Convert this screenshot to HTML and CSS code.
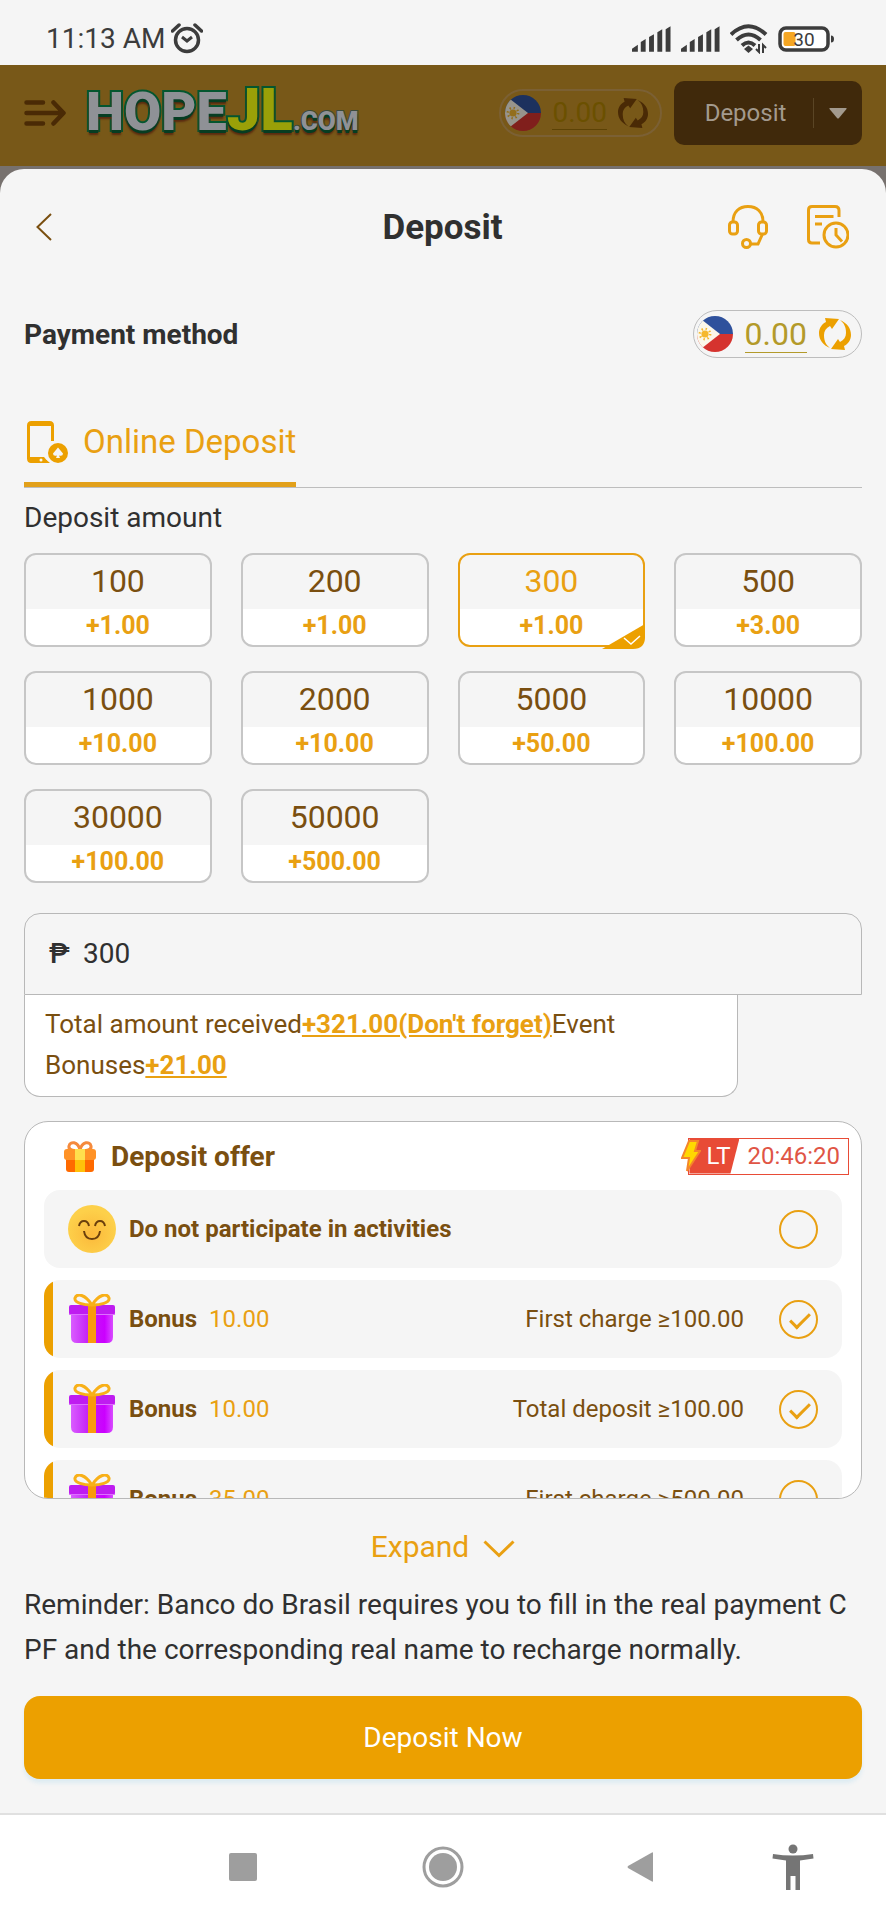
FILE: index.html
```html
<!DOCTYPE html>
<html lang="en">
<head>
    <meta charset="UTF-8">
    <meta name="viewport" content="width=device-width, initial-scale=1.0">
    <title>Deposit</title>
    <link rel="stylesheet" href="styles.css">
</head>
<body>

<!-- Shared icons -->
<svg class="defs" aria-hidden="true">
    <symbol id="flag" viewBox="0 0 36 36">
        <clipPath id="round"><circle cx="18" cy="18" r="18"/></clipPath>
        <g clip-path="url(#round)">
            <rect width="36" height="18" fill="#2f519c"/>
            <rect y="18" width="36" height="18" fill="#d5332e"/>
            <path d="M-4-3 23 18-4 39z" fill="#fbf7ea"/>
            <circle cx="8" cy="18" r="3.6" fill="#f5b82e"/>
            <circle cx="8" cy="18" r="5.2" fill="none" stroke="#f5b82e" stroke-width="2.4" stroke-dasharray="1.4 2.68"/>
        </g>
    </symbol>
    <symbol id="refresh" viewBox="0 0 32 32">
        <g fill="currentColor">
            <path id="arc" d="M11 30C4 27 0 22 0 15 0 10 3 6 7 4L6 0l14 1-7 10-2-3c-4 2-6 5-6 9 0 6 2 10 6 13z"/>
            <use href="#arc" transform="rotate(180 16 16)"/>
        </g>
    </symbol>
    <symbol id="gift" viewBox="0 0 48 50">
        <linearGradient id="box"><stop offset="0" stop-color="#d95cff"/><stop offset=".45" stop-color="#c31cf5"/><stop offset=".8" stop-color="#cb00ff"/><stop offset="1" stop-color="#d84cff"/></linearGradient>
        <path d="M3 20h42v23q0 6-6 6H9q-6 0-6-6z" fill="url(#box)"/>
        <rect x="1" y="11" width="46" height="10" rx="2" fill="#bf1cf0"/>
        <path d="M1 20.500h46" stroke="#dd70ff"/>
        <path d="M20 11h8v38h-8z" fill="#f99a0c"/>
        <path d="M24 11C17 0 9-1 7 4c-1 5 9 7 17 7zm0 0C31 0 39-1 41 4c1 5-9 7-17 7z" fill="none" stroke="#f8b019" stroke-width="3"/>
    </symbol>
    <symbol id="signal" viewBox="0 0 40 26">
        <path d="M0 26v-3l6-4v7zM9 26V16l5-3v13zM17.500 26V11l5-3v18zM26 26V6l5-3v23zM34.500 26V3l5-3v26z" fill="#3c3c3c"/>
    </symbol>
</svg>

<div class="status">
    <span class="time">11:13 AM</span>
    <svg class="alarm" viewBox="0 0 32 32" fill="none" stroke="#3c3c3c" stroke-width="3.500">
        <circle cx="16" cy="17" r="11.500"/>
        <path d="M1.500 8 8 2M30.500 8 24 2" stroke-linecap="round"/>
        <path d="m11 14 5 4 5-4" stroke-width="3"/>
    </svg>
    <div class="status-right">
        <svg class="signal"><use href="#signal"/></svg>
        <svg class="signal"><use href="#signal"/></svg>
        <svg class="wifi" viewBox="0 0 38 30" fill="none" stroke="#3c3c3c" stroke-width="4">
            <path d="M1 10.500Q18.500-6 36 10.500M6.500 16q12-11 24 0M12 21.500q6.500-6 13 0"/>
            <path d="m14 25 4.500-3.500L23 25l-4.500 4z" fill="#3c3c3c" stroke="none"/>
            <path d="M29 20v8l-3-3M33 29v-8l3 3" stroke-width="2"/>
        </svg>
        <svg class="battery" viewBox="0 0 56 26">
            <rect x="2" y="2" width="48" height="22" rx="6" fill="#fff" stroke="#3c3c3c" stroke-width="3.500"/>
            <rect x="5.500" y="6" width="12" height="14" rx="2" fill="#f5a623"/>
            <path d="M53 9.500q3 0 3 3.500t-3 3.500z" fill="#3c3c3c"/>
            <text x="26" y="20" text-anchor="middle" class="battery-text">30</text>
        </svg>
    </div>
</div>

<header class="topbar">
    <button class="icon-btn menu" aria-label="Menu">
        <svg viewBox="0 0 42 26" fill="none" stroke="#4a2a05" stroke-width="4.500" stroke-linecap="round" stroke-linejoin="round">
            <path d="M2.500 2.500H19M2.500 13H39M2.500 23.500H19M29.500 2.500 39.500 13l-10 10.500"/>
        </svg>
    </button>
    <a class="logo" href="#"><span class="hope">HOPE</span><span class="jl">JL</span><span class="com">.COM</span></a>
    <div class="balance balance-dim">
        <svg class="flag"><use href="#flag"/></svg>
        <span class="value">0.00</span>
        <button class="icon-btn" aria-label="Refresh"><svg class="refresh"><use href="#refresh"/></svg></button>
    </div>
    <div class="top-deposit">
        <button class="top-deposit-btn">Deposit</button>
        <button class="top-deposit-more" aria-label="More">
            <svg viewBox="0 0 18 11"><path d="M1 0h16q1 0 .5 1L10 10q-1 1-2 0L.5 1Q0 0 1 0z" fill="#a39a8e"/></svg>
        </button>
    </div>
</header>

<main class="backdrop">
<section class="sheet">
    <div class="sheet-head">
        <button class="icon-btn back" aria-label="Back">
            <svg viewBox="0 0 16 28" fill="none" stroke="#7a4f10" stroke-width="2"><path d="M15 1 1.500 14 15 27"/></svg>
        </button>
        <h1>Deposit</h1>
        <div class="head-actions">
            <button class="icon-btn" aria-label="Support">
                <svg class="support" viewBox="0 0 40 44" fill="none" stroke="#e9a012" stroke-width="3">
                    <rect x="1.500" y="17" width="8" height="12" rx="3"/>
                    <rect x="30.500" y="17" width="8" height="12" rx="3"/>
                    <path d="M5 17C5 7 11 1.500 20 1.500S35 7 35 17M34.500 29 30 39h-7.500"/>
                    <circle cx="18.500" cy="38.500" r="4"/>
                </svg>
            </button>
            <button class="icon-btn" aria-label="Records">
                <svg class="records" viewBox="0 0 42 44" fill="none" stroke="#e9a012" stroke-width="3">
                    <path d="M13 38H5q-3.500 0-3.500-3.500V5q0-3.500 3.500-3.500h23q4 0 4 4V12M8 11.500h18.500M8 19h7"/>
                    <circle cx="29" cy="30" r="12"/>
                    <path d="M29 23v7l6 6.500"/>
                </svg>
            </button>
        </div>
    </div>

    <div class="method">
        <h2>Payment method</h2>
        <div class="balance">
            <svg class="flag"><use href="#flag"/></svg>
            <span class="value">0.00</span>
            <button class="icon-btn" aria-label="Refresh"><svg class="refresh"><use href="#refresh"/></svg></button>
        </div>
    </div>

    <nav class="tabs">
        <a class="tab" href="#">
            <svg class="phone" viewBox="0 0 42 42">
                <path d="M20 40.500H4.500q-3 0-3-3v-33q0-3 3-3h18q3 0 3 3V20" fill="none" stroke="#eca000" stroke-width="3"/>
                <path d="M2 2h22v3H2zM2 36h15q2 3 6 6H5q-3 0-3-3z" fill="#eca000"/>
                <circle cx="14" cy="39" r="1.500" fill="#f5f5f5"/>
                <circle cx="31" cy="32" r="10" fill="#eca000"/>
                <path d="m31 26.500 5 6q0 3-4 2l1 2.500h-4l1-2.500q-4 1-4-2z" fill="#f5f5f5"/>
            </svg>
            Online Deposit
        </a>
    </nav>

    <form id="depositForm">
        <label class="amount-label" for="amount">Deposit amount</label>
        <div class="amounts">
            <button type="button" class="amount" data-value="100">100<b>+1.00</b></button>
            <button type="button" class="amount" data-value="200">200<b>+1.00</b></button>
            <button type="button" class="amount active" data-value="300">300<b>+1.00</b></button>
            <button type="button" class="amount" data-value="500">500<b>+3.00</b></button>
            <button type="button" class="amount" data-value="1000">1000<b>+10.00</b></button>
            <button type="button" class="amount" data-value="2000">2000<b>+10.00</b></button>
            <button type="button" class="amount" data-value="5000">5000<b>+50.00</b></button>
            <button type="button" class="amount" data-value="10000">10000<b>+100.00</b></button>
            <button type="button" class="amount" data-value="30000">30000<b>+100.00</b></button>
            <button type="button" class="amount" data-value="50000">50000<b>+500.00</b></button>
            <svg class="corner" id="corner" viewBox="0 0 43 25">
                <path d="M0 25 43 0v13q0 12-12 12z" fill="#eca000"/>
                <path d="m22 14 7 6 9-8" fill="none" stroke="#fff" stroke-width="1.500"/>
            </svg>
        </div>

        <div class="field">
            <span class="currency">₱</span>
            <input type="text" id="amount" name="amount" inputmode="numeric" value="300">
        </div>
        <p class="received">Total amount received<b>+321.00(Don't forget)</b>Event Bonuses<b>+21.00</b></p>

        <div class="offer">
            <div class="offer-head">
                <svg class="offer-icon" viewBox="0 0 32 31">
                    <path d="M16 9C12 10 4 10 5 5s9-5 11 4c2-9 10-9 11-4s-7 5-11 4z" fill="none" stroke="#f58a3c" stroke-width="3"/>
                    <path d="M2 18h28v10q0 3-3 3H5q-3 0-3-3z" fill="#ff6a00"/>
                    <rect y="8" width="32" height="11" rx="3" fill="#ff9226"/>
                    <path d="M11 8h10v23H11z" fill="#ffc10a"/>
                    <path d="M11 8h10v11H11z" fill="#ffdf4d"/>
                </svg>
                <h3>Deposit offer</h3>
                <div class="timer">
                    <span class="lt">LT</span>
                    <time>20:46:20</time>
                    <svg class="bolt" viewBox="0 0 20 34"><path d="M8 2h9l-3 10h5L6 32l2-13H1z" fill="#ffd800" stroke="#f5862a" stroke-width="2"/></svg>
                </div>
            </div>
            <label class="row plain">
                <svg class="row-icon" viewBox="0 0 48 48">
                    <radialGradient id="face" cy=".6"><stop offset="0" stop-color="#fbb83a"/><stop offset="1" stop-color="#fdd04a"/></radialGradient>
                    <circle cx="24" cy="24" r="24" fill="url(#face)"/>
                    <path d="M11 21q1-5 5-5t5 5M27 21q1-5 5-5t5 5M16 26q1 8 8 8t8-8" fill="none" stroke="#6b3f0c" stroke-width="2"/>
                </svg>
                <b>Do not participate in activities</b>
                <input type="checkbox" name="none">
            </label>
            <label class="row">
                <svg class="row-icon gift"><use href="#gift"/></svg>
                <b>Bonus</b><span class="bonus">10.00</span>
                <span class="rule">First charge ≥100.00</span>
                <input type="checkbox" name="first100" checked>
            </label>
            <label class="row">
                <svg class="row-icon gift"><use href="#gift"/></svg>
                <b>Bonus</b><span class="bonus">10.00</span>
                <span class="rule">Total deposit ≥100.00</span>
                <input type="checkbox" name="total100" checked>
            </label>
            <label class="row">
                <svg class="row-icon gift"><use href="#gift"/></svg>
                <b>Bonus</b><span class="bonus">35.00</span>
                <span class="rule">First charge ≥500.00</span>
                <input type="checkbox" name="first500">
            </label>
        </div>

        <button type="button" class="expand">Expand
            <svg viewBox="0 0 32 18" fill="none" stroke="#e9a012" stroke-width="3"><path d="m1.500 1.500 14.500 14 14.500-14"/></svg>
        </button>

        <p class="reminder">Reminder: Banco do Brasil requires you to fill in the real payment CPF and the corresponding real name to recharge normally.</p>

        <button type="submit" class="btn">Deposit Now</button>
    </form>
</section>
</main>

<footer class="sysnav">
    <button class="icon-btn" aria-label="Recent apps"><svg viewBox="0 0 46 46"><rect x="9" y="9" width="28" height="28" rx="2" fill="#9e9e9e"/></svg></button>
    <button class="icon-btn" aria-label="Home"><svg viewBox="0 0 46 46"><circle cx="23" cy="23" r="19" fill="none" stroke="#9e9e9e" stroke-width="3"/><circle cx="23" cy="23" r="14" fill="#9e9e9e"/></svg></button>
    <button class="icon-btn" aria-label="Back"><svg viewBox="0 0 46 46"><path d="M33 9v28q0 1-1 .5L8 24q-1-1 0-2L32 8.500q1-.5 1 .5z" fill="#9e9e9e"/></svg></button>
    <button class="icon-btn" aria-label="Accessibility"><svg viewBox="0 0 46 46"><circle cx="23" cy="5" r="4.500" fill="#757575"/><path d="M3 10q20 3 40 0l.5 4.500L30 16.500V46h-4.500V32h-5v14H16V16.500L2.500 14.500z" fill="#757575"/></svg></button>
</footer>

<script>
    const field = document.getElementById('amount');
    const corner = document.getElementById('corner');
    const buttons = document.querySelectorAll('.amount');

    // Move the tick to the chosen amount and copy it to the field
    function choose(button) {
        buttons.forEach(b => b.classList.remove('active'));
        button.classList.add('active');
        button.appendChild(corner);
        field.value = button.dataset.value;
    }

    buttons.forEach(b => b.addEventListener('click', () => choose(b)));
    choose(document.querySelector('.amount.active'));

    document.getElementById('depositForm').addEventListener('submit', e => e.preventDefault());
</script>

</body>
</html>
```

FILE: styles.css
```css
* {
    margin: 0;
    padding: 0;
    box-sizing: border-box;
}

body {
    font-family: Roboto, "Liberation Sans", sans-serif;
    font-size: 28px;
    color: #303030;
    background-color: #fff;
}

button,
input {
    font: inherit;
    color: inherit;
    border: none;
    background: none;
}

button {
    cursor: pointer;
}

a {
    text-decoration: none;
}

svg {
    display: block;
    flex-shrink: 0;
}

.defs {
    position: absolute;
    width: 0;
    height: 0;
}

.icon-btn {
    display: flex;
}

/* Phone status bar */
.status {
    display: flex;
    align-items: center;
    height: 65px;
    padding: 12px 52px 0 46px;
    background-color: #f5f5f5;
    color: #3c3c3c;
}

.alarm {
    width: 32px;
    height: 32px;
    margin-left: 6px;
}

.status-right {
    display: flex;
    align-items: center;
    gap: 10px;
    margin-left: auto;
}

.signal {
    width: 39px;
    height: 26px;
}

.wifi {
    width: 38px;
    height: 30px;
}

.battery {
    width: 56px;
    height: 26px;
}

.battery-text {
    font-size: 19px;
    fill: #3c3c3c;
}

/* Dimmed site header */
.topbar {
    display: flex;
    align-items: center;
    height: 101px;
    padding: 0 24px 5px;
    background-color: #785818;
}

.menu svg {
    width: 42px;
    height: 26px;
}

.logo {
    display: flex;
    align-items: baseline;
    padding-top: 4px;
    margin-left: 20px;
    font-weight: 900;
    font-size: 54px;
    line-height: 60px;
    color: #8f9196;
    -webkit-text-stroke: 4px #04562f;
    paint-order: stroke fill;
    text-shadow: 0 3px 0 #063d22, 0 5px 2px #5a2b10;
}

.jl {
    font-size: 60px;
    color: #9aa008;
}

.com {
    font-size: 26px;
    -webkit-text-stroke: 2px #3c4a3a;
}

.balance {
    display: flex;
    align-items: center;
    gap: 12px;
    height: 48px;
    padding: 0 10px 0 3px;
    border: 1px solid #bdbdbd;
    border-radius: 24px;
    font-size: 32px;
    color: #b39a2a;
}

.value {
    line-height: 36px;
    border-bottom: 1px solid #b39a2a;
}

.flag {
    width: 36px;
    height: 36px;
}

.refresh {
    width: 32px;
    height: 32px;
    color: #eca000;
}

.balance-dim {
    gap: 11px;
    margin-left: auto;
    padding: 0 12px 0 4px;
    border: 2px solid #7b6034;
    font-size: 28px;
    color: #6b5000;
}

.balance-dim .value {
    line-height: 32px;
    border-color: #5c4205;
}

.balance-dim .flag {
    filter: brightness(0.6);
}

.balance-dim .refresh {
    width: 30px;
    height: 30px;
    color: #4a2a05;
}

.top-deposit {
    display: flex;
    align-items: center;
    width: 188px;
    height: 64px;
    margin-left: 12px;
    border-radius: 10px;
    background-color: #40290b;
    color: #a39a8e;
    font-size: 24px;
}

.top-deposit-btn {
    flex: 1;
    line-height: 30px;
    padding-left: 4px;
    border-right: 1px solid #5a4525;
}

.top-deposit-more {
    padding: 10px 15px;
}

.top-deposit-more svg {
    width: 18px;
    height: 11px;
}

/* Deposit sheet */
.backdrop {
    padding-top: 3px;
    background-color: #77716e;
}

.sheet {
    padding: 0 24px 34px;
    border-radius: 24px 24px 0 0;
    background-color: #f5f5f5;
}

.sheet-head {
    display: grid;
    grid-template-columns: 1fr auto 1fr;
    align-items: center;
    height: 116px;
    padding: 0 13px 0 12px;
}

.back svg {
    width: 16px;
    height: 28px;
}

h1 {
    font-size: 35px;
}

.head-actions {
    display: flex;
    justify-content: flex-end;
    gap: 39px;
}

.support {
    width: 40px;
    height: 44px;
}

.records {
    width: 42px;
    height: 44px;
}

.method {
    display: flex;
    justify-content: space-between;
    align-items: center;
    margin-top: 25px;
}

h2,
h3 {
    font-size: 28px;
}

.tabs {
    display: flex;
    height: 90px;
    margin-top: 40px;
    border-bottom: 1px solid #bdbdbd;
}

.tab {
    display: flex;
    align-items: center;
    gap: 14px;
    padding: 3px 0 0 3px;
    border-bottom: 5px solid #e2a01a;
    font-size: 33px;
    color: #e9a012;
}

.phone {
    width: 42px;
    height: 42px;
}

.amount-label {
    display: block;
    margin: 12px 0 18px;
    line-height: 35px;
}

.amounts {
    display: grid;
    grid-template-columns: repeat(4, 1fr);
    gap: 24px 29px;
}

.amount {
    position: relative;
    height: 94px;
    border: 2px solid #c6c6c6;
    border-radius: 12px;
    background: linear-gradient(#f5f5f5 54px, #fff 54px);
    font-size: 32px;
    line-height: 52px;
    color: #7a4f10;
}

.amount b {
    display: block;
    font-size: 25px;
    line-height: 38px;
    color: #e9a012;
}

.amount.active {
    border-color: #e9a012;
    color: #e9a012;
}

.corner {
    position: absolute;
    right: -2px;
    bottom: -4px;
    width: 43px;
    height: 25px;
}

.field {
    display: flex;
    align-items: center;
    gap: 12px;
    height: 82px;
    margin-top: 30px;
    padding: 0 24px 2px;
    border: 1px solid #b8b8b8;
    border-radius: 16px 16px 0 0;
}

.field input {
    flex: 1;
    outline: none;
}

.currency {
    width: 22px;
    font-weight: 500;
}

.received {
    width: 85.2%;
    padding: 9px 100px 10px 20px;
    border: 1px solid #b8b8b8;
    border-top: none;
    border-radius: 0 0 16px 16px;
    background-color: #fff;
    font-size: 26px;
    line-height: 41px;
    color: #7a4f10;
}

.received b {
    color: #e9a012;
    text-decoration: underline;
}

/* Deposit offers */
.offer {
    height: 378px;
    margin-top: 24px;
    padding: 0 19px;
    overflow: hidden;
    border: 1px solid #b8b8b8;
    border-radius: 24px;
    background-color: #fff;
    color: #7a4f10;
}

.offer-head {
    display: flex;
    align-items: center;
    height: 68px;
    margin-right: -7px;
    padding-left: 20px;
}

.offer-icon {
    width: 32px;
    height: 31px;
}

h3 {
    margin-left: 15px;
}

.timer {
    position: relative;
    display: flex;
    margin-left: auto;
    border: 1px solid #e84b36;
    font-size: 24px;
    line-height: 35px;
    color: #e05545;
}

.lt {
    width: 50px;
    padding-left: 17px;
    color: #fff;
    background-color: #e84b36;
    clip-path: polygon(0 0, 100% 0, 82% 100%, 0 100%);
}

.timer time {
    padding: 0 8px;
}

.bolt {
    position: absolute;
    left: -8px;
    top: 0;
    width: 20px;
    height: 34px;
}

.row {
    display: flex;
    align-items: center;
    height: 78px;
    margin-bottom: 12px;
    padding: 0 24px;
    border-radius: 16px;
    background: linear-gradient(to right, #eca000 9px, #f5f5f5 9px);
    font-size: 24px;
}

.plain {
    background: #f5f5f5;
}

.row-icon {
    width: 48px;
    height: 48px;
    margin-right: 13px;
}

.gift {
    height: 50px;
}

.bonus {
    margin-left: 12px;
    color: #e9a012;
}

.rule {
    margin-left: auto;
}

.row input {
    appearance: none;
    width: 39px;
    height: 39px;
    margin-left: 35px;
    border: 2px solid #e9a012;
    border-radius: 50%;
}

.plain input {
    margin-left: auto;
}

.row input:checked::before {
    content: "";
    display: block;
    width: 17px;
    height: 8px;
    margin: 11px 0 0 9px;
    border: solid #e9a012;
    border-width: 0 0 3px 3px;
    transform: rotate(-45deg);
}

.expand {
    display: flex;
    align-items: center;
    gap: 14px;
    margin: 30px auto 0;
    font-size: 30px;
    line-height: 36px;
    color: #e9a012;
}

.expand svg {
    width: 32px;
    height: 18px;
    margin-top: 4px;
}

.reminder {
    margin-top: 17px;
    line-height: 45px;
    word-break: break-all;
}

.btn {
    display: block;
    width: 100%;
    height: 83px;
    margin-top: 24px;
    border-radius: 16px;
    background-color: #eca000;
    color: #fff;
    box-shadow: 0 4px 4px #dcebf2;
}

/* Phone navigation bar */
.sysnav {
    display: grid;
    grid-template-columns: 2fr 2fr 2fr 1fr;
    justify-items: center;
    padding: 29px 43px 28px 143px;
    border-top: 2px solid #e0e0e0;
}

.sysnav svg {
    width: 46px;
    height: 46px;
}
```
